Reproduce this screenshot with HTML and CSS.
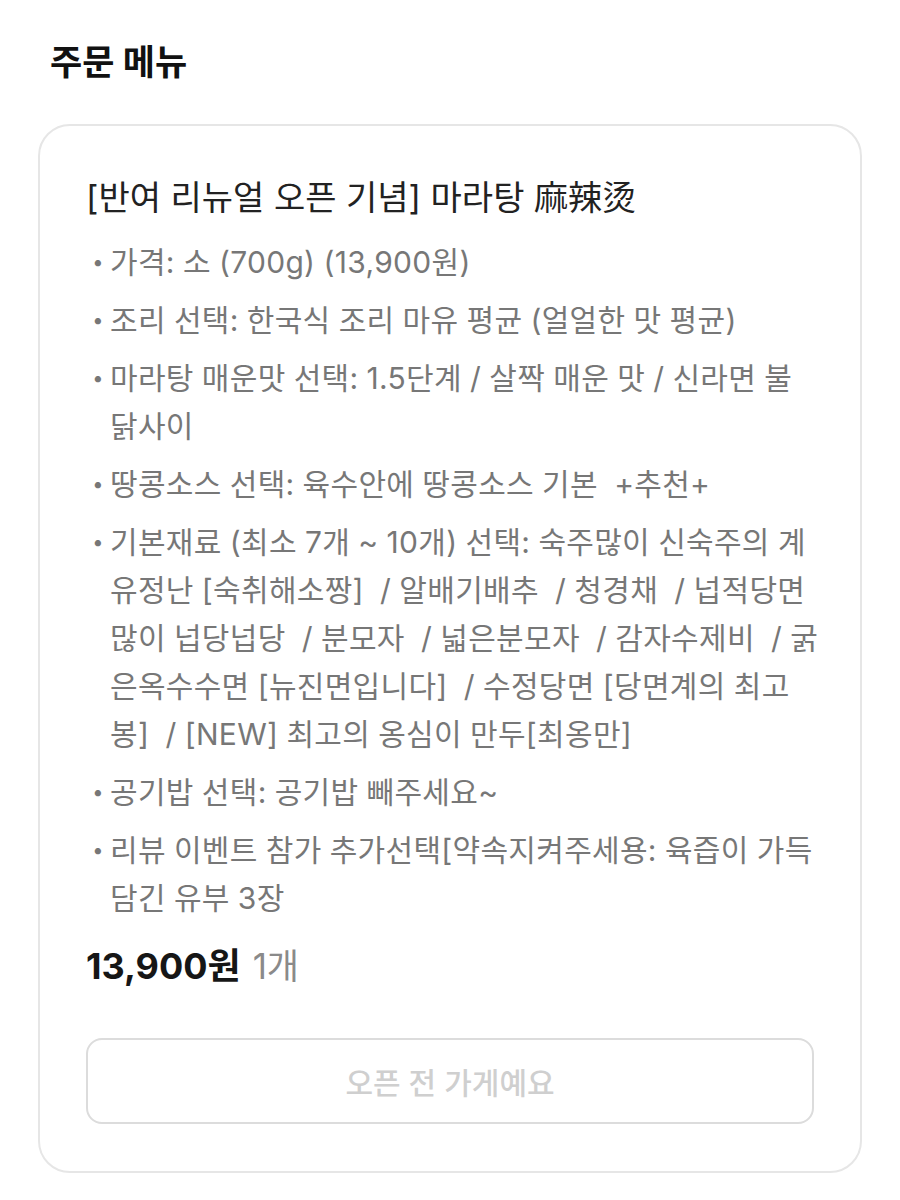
FILE: index.html
```html
<!DOCTYPE html>
<html lang="ko">
  <head>
    <meta charset="UTF-8" />
    <meta name="viewport" content="width=device-width, initial-scale=1.0" />
    <title>주문 메뉴</title>
    <link rel="stylesheet" href="styles.css">
  </head>
  <body>
    <div class="page">
      <h1 class="page-title">주문 메뉴</h1>

      <div class="order-card">
        <h2 class="menu-name">[반여 리뉴얼 오픈 기념] 마라탕 麻辣烫</h2>

        <ul class="option-list">
          <li class="option"><span class="dot">•</span><span class="option-text">가격: 소 (700g) (13,900원)</span></li>
          <li class="option"><span class="dot">•</span><span class="option-text">조리 선택: 한국식 조리 마유 평균 (얼얼한 맛 평균)</span></li>
          <li class="option"><span class="dot">•</span><span class="option-text">마라탕 매운맛 선택: 1.5단계 / 살짝 매운 맛 / 신라면 불<br>닭사이</span></li>
          <li class="option"><span class="dot">•</span><span class="option-text">땅콩소스 선택: 육수안에 땅콩소스 기본 &nbsp;+추천+</span></li>
          <li class="option"><span class="dot">•</span><span class="option-text">기본재료 (최소 7개 ~ 10개) 선택: 숙주많이 신숙주의 계<br>유정난 [숙취해소짱] &nbsp;/ 알배기배추 &nbsp;/ 청경채 &nbsp;/ 넙적당면<br>많이 넙당넙당 &nbsp;/ 분모자 &nbsp;/ 넓은분모자 &nbsp;/ 감자수제비 &nbsp;/ 굵<br>은옥수수면 [뉴진면입니다] &nbsp;/ 수정당면 [당면계의 최고<br>봉] &nbsp;/ [NEW] 최고의 옹심이 만두[최옹만]</span></li>
          <li class="option"><span class="dot">•</span><span class="option-text">공기밥 선택: 공기밥 빼주세요~</span></li>
          <li class="option"><span class="dot">•</span><span class="option-text">리뷰 이벤트 참가 추가선택[약속지켜주세용: 육즙이 가득<br>담긴 유부 3장</span></li>
        </ul>

        <div class="price-row">
          <span class="price">13,900원</span>
          <span class="count">1개</span>
        </div>

        <button class="order-button" disabled>오픈 전 가게예요</button>
      </div>
    </div>
  </body>
</html>
```

FILE: styles.css
```css
* {
  margin: 0;
  padding: 0;
  box-sizing: border-box;
  font-family: Inter, "Noto Sans CJK KR", sans-serif;
}

body {
  background: #ffffff;
  color: #1a1a1a;
}

.page {
  padding: 36px 38px 30px;
}

.page-title {
  font-size: 35px;
  font-weight: 700;
  line-height: 52px;
  padding-left: 12px;
  color: #111;
  margin-bottom: 36px;
}

.order-card {
  border: 2px solid #e6e6e6;
  border-radius: 32px;
  padding: 46px 46px 47px;
}

.menu-name {
  font-size: 34px;
  font-weight: 400;
  line-height: 52px;
  color: #222;
  margin-bottom: 14px;
}

.option-list {
  list-style: none;
  display: flex;
  flex-direction: column;
  gap: 10px;
}

.option {
  display: flex;
  font-size: 30px;
  line-height: 48px;
  letter-spacing: 0.3px;
  word-spacing: -0.6px;
  color: #777;
}

.option .dot {
  flex: 0 0 24px;
  text-align: center;
  font-size: 20px;
}

.option-text {
  flex: 1;
  white-space: nowrap;
}

.price-row {
  margin-top: 22px;
  line-height: 44px;
  display: flex;
  align-items: baseline;
  gap: 12px;
}

.price {
  font-size: 36px;
  font-weight: 700;
  color: #161616;
}

.count {
  font-size: 35px;
  color: #8a8a8a;
}

.order-button {
  display: block;
  width: 100%;
  height: 86px;
  margin-top: 50px;
  background: #fff;
  border: 2px solid #dcdcdc;
  border-radius: 16px;
  font-size: 30px;
  font-weight: 500;
  color: #cfcfcf;
}
```
